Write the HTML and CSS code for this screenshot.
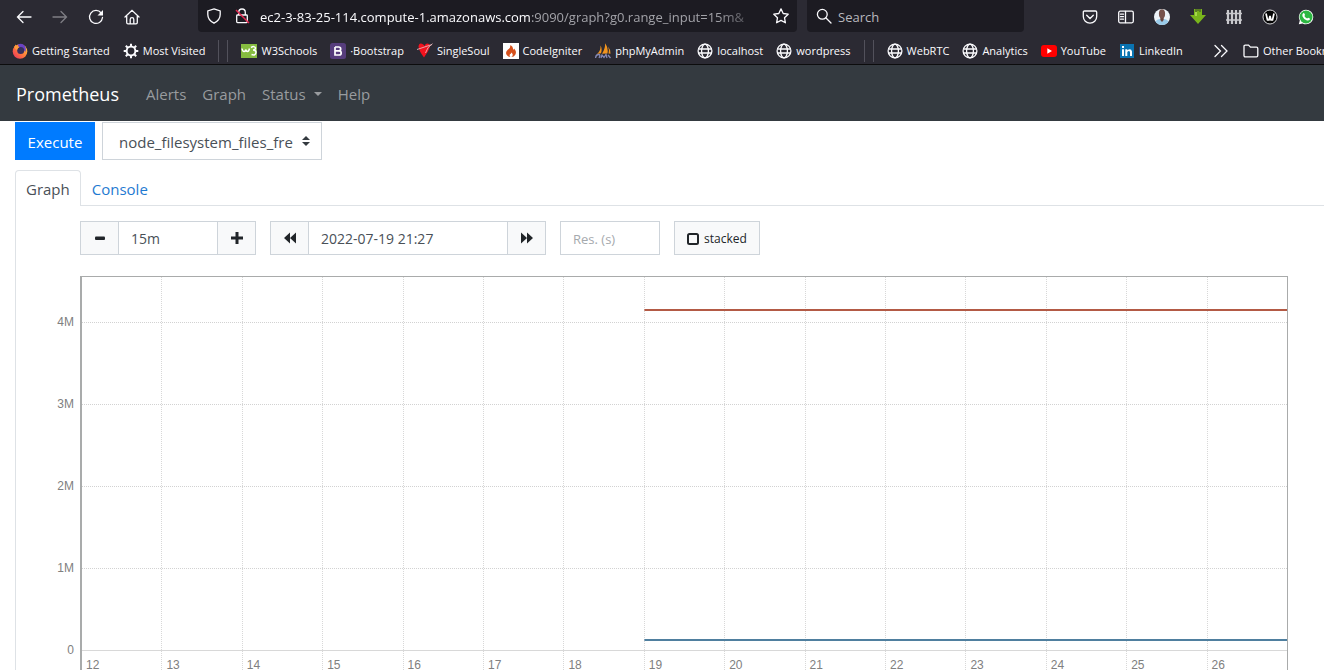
FILE: index.html
```html
<!DOCTYPE html>
<html lang="en">
<head>
<meta charset="utf-8">
<title>Prometheus</title>
<link rel="stylesheet" href="styles.css">
</head>
<body>
<svg class="defs" aria-hidden="true">
  <symbol id="globe" viewBox="0 0 16 16"><g fill="none" stroke="#fbfbfe" stroke-width="1.3"><circle cx="8" cy="8" r="6.9"/><ellipse cx="8" cy="8" rx="3.4" ry="6.9"/><path d="M1.4 6h13.2M1.4 10h13.2"/></g></symbol>
</svg>
<header class="browser">
  <div class="toolbar">
    <div class="tool-group">
      <button class="tool" aria-label="Back"><svg viewBox="0 0 16 16"><path class="line" d="M15 8H1.5M7 2.5 1.5 8 7 13.5"/></svg></button>
      <button class="tool tool-off" aria-label="Forward" disabled><svg viewBox="0 0 16 16"><path class="line" d="M1 8h13.5M9 2.5 14.500 8 9 13.5"/></svg></button>
      <button class="tool" aria-label="Reload"><svg viewBox="0 0 16 16"><path class="line" d="M13.200 4A6.500 6.500 0 1 0 14.500 8.500"/><path fill="#fbfbfe" d="M15 1v5.500H9.500z"/></svg></button>
      <button class="tool" aria-label="Home"><svg viewBox="0 0 16 16"><path class="line" d="M1 8 8 1.300 15 8M2.700 7v6.500q0 1.300 1.300 1.300h8q1.300 0 1.300-1.300V7M6.200 14.500V10.500q0-1.800 1.800-1.800t1.800 1.800v4"/></svg></button>
    </div>
    <div class="urlbar">
      <svg class="icon" viewBox="0 0 16 16"><path class="line" d="M8 .9 14.200 3v3.500c0 3.800-2.500 6.800-6.200 8.700-3.700-1.900-6.200-4.900-6.200-8.700V3z"/></svg>
      <svg class="icon lock" viewBox="0 0 16 16"><path class="line" d="M4.700 7V4.300a3.300 3.300 0 0 1 6.600 0V7M3.500 7h9q.8 0 .8.800v6q0 .8-.8.800h-9q-.8 0-.8-.8v-6q0-.8.8-.8z"/><path stroke="#e22850" stroke-width="1.500" d="M2 2l13 13"/></svg>
      <div class="url"><span class="host">ec2-3-83-25-114.compute-1.amazonaws.com</span>:9090/graph?g0.range_input=15m&amp;</div>
      <svg class="icon" viewBox="0 0 16 16"><path class="line" stroke-linejoin="round" d="M8 .9 10.200 5.500l5 .7-3.700 3.500.9 5.100L8 12.400l-4.400 2.400.9-5.100L.8 6.200l5-.7z"/></svg>
    </div>
    <label class="search">
      <svg class="icon" viewBox="0 0 16 16"><circle class="line" cx="6.300" cy="6.300" r="4.900"/><path class="line" d="m10 10 5 5"/></svg>
      <input class="search-input" type="text" placeholder="Search" aria-label="Search">
    </label>
    <div class="tool-group">
      <button class="tool" aria-label="Pocket"><svg viewBox="0 0 16 16"><path class="line" d="M2.500 2h11q1.200 0 1.200 1.200V7.500a6.700 6.700 0 0 1-13.400 0V3.200Q1.300 2 2.500 2zM4.700 6.300 8 9.500l3.300-3.200"/></svg></button>
      <button class="tool" aria-label="Sidebar"><svg viewBox="0 0 16 16"><rect class="line" x=".7" y="2.200" width="14.600" height="11.600" rx="1.500"/><path class="line" d="M7.500 2.500v11M2.500 5.200H5.500M2.500 7.700H5.500M2.500 10.200H5.500"/></svg></button>
      <button class="tool" aria-label="Profile"><svg viewBox="0 0 16 16"><clipPath id="face"><circle cx="8" cy="8" r="8"/></clipPath><g clip-path="url(#face)"><path fill="#edf3f8" d="M0 0h16v16H0z"/><path fill="#9acbe9" d="M0 16Q1 10.500 6 10l2 2 2-2q5 .5 6 6z"/><path fill="#66453f" d="M6.300 8h3.400v3L8 13l-1.700-2z"/><ellipse cx="8" cy="4.800" rx="3.100" ry="4.600" fill="#76524c"/></g></svg></button>
      <button class="tool" aria-label="Downloader"><svg viewBox="0 0 16 16"><path fill="#79b51c" d="M4 0h8v6h4l-8 9-8-9h4z"/><path stroke="#2b2a33" stroke-width=".8" d="M6 0v3M8 0v2M10 0v3"/><path fill="#a6d84a" d="M5 3h2v4H5z"/></svg></button>
      <button class="tool" aria-label="Fence"><svg viewBox="0 0 16 16"><path stroke="#c9c9cd" stroke-width="2.200" d="M2 1v14M6 1v14M10 1v14M14 1v14"/><path stroke="#c9c9cd" stroke-width="1.300" d="M0 4.500h16M0 11h16"/></svg></button>
      <button class="tool" aria-label="W extension"><svg viewBox="0 0 16 16"><circle cx="8" cy="8" r="7" fill="#050505" stroke="#d8d8da" stroke-width="1"/><path fill="none" stroke="#fff" stroke-width="1.700" d="M4 4.500 5.500 11H7L8 7l1 4h1.500L12 4.500"/></svg></button>
      <button class="tool" aria-label="WhatsApp"><svg viewBox="0 0 16 16"><path fill="#fff" d="M8 .7a7.300 7.300 0 0 1 0 14.600q-1.800 0-3.400-.9L.8 15.300l1-3.700A7.300 7.300 0 0 1 8 .7z"/><circle cx="8" cy="8" r="6.500" fill="#2cb742"/><path fill="#fff" d="M5.200 4.300q.7-.6 1 0l.8 1.500q.1.400-.6 1.100.9 1.900 2.700 2.700.8-1 1.200-.9l1.500.8q.5.300-.1 1.200-1.200 1.300-3.200.5-3-1.200-4.100-4-.4-2 .8-2.900z"/></svg></button>
    </div>
  </div>
  <nav class="bookmarks">
    <a class="mark" href="#"><svg class="icon" viewBox="0 0 16 16"><defs><linearGradient id="fox" x1="1" y1="0" x2="0" y2="1"><stop offset="0" stop-color="#ffd83c"/><stop offset=".5" stop-color="#ff7b3b"/><stop offset="1" stop-color="#e92a63"/></linearGradient></defs><circle cx="8" cy="8.500" r="7.300" fill="url(#fox)"/><path fill="#6a42c4" d="M6 1.500Q10-.5 13 3q1.500 3 .3 6-1-3-4-3.500Q6 5 6 1.500z"/><circle cx="8.700" cy="7.400" r="3.500" fill="#37305c"/><path fill="#ff9a3a" d="M2 4q1-1 1.500-2.500Q5 3.500 7.500 4q-2 .8-2.500 3-1.500 0-3-3z"/></svg>Getting Started</a>
    <a class="mark" href="#"><svg class="icon" viewBox="0 0 16 16"><circle cx="8" cy="8" r="4.400" fill="none" stroke="#fbfbfe" stroke-width="2"/><path stroke="#fbfbfe" stroke-width="2" d="M8 .7V4M8 12v3.300M.7 8H4M12 8h3.300M2.800 2.800 5 5M11 11l2.200 2.200M13.200 2.800 11 5M5 11l-2.200 2.200"/></svg>Most Visited</a>
    <span class="rules"></span>
    <a class="mark" href="#"><svg class="icon" viewBox="0 0 16 16"><path fill="#86bc40" d="M0 1h16v14H0z"/><path fill="none" stroke="#fff" stroke-width="1.500" d="M1 5.500q.5 3 2 3t1.700-2q.5 2 1.800 2T8.500 5.500M10 4.500q3.500-2 4.500.5 0 2-2.500 2 3 0 3 2.500-.5 3.500-4.500 2"/></svg>W3Schools</a>
    <a class="mark" href="#"><svg class="icon" viewBox="0 0 16 16"><rect width="16" height="16" rx="2.500" fill="#563d7c"/><path fill="none" stroke="#fff" stroke-width="1.700" d="M5 4h3.700q2 0 2 1.900T8.700 7.800H5M5 7.800h4q2.200 0 2.200 2.100T9 12H5zV4"/></svg>·Bootstrap</a>
    <a class="mark" href="#"><svg class="icon" viewBox="0 0 16 16"><path fill="#f3121e" d="M7 14.500Q2 8 1.500 3.500 2-.5 5 .7 7 1.500 7.500 3 9-.5 12 1q1.500 1 .5 4-1.500 4-5.500 9.500z"/><path fill="none" stroke="#e3b5b8" stroke-width=".9" d="M15.500.7Q10 4 8.500 10M15 1.500 0 6.500"/></svg>SingleSoul</a>
    <a class="mark" href="#"><svg class="icon" viewBox="0 0 16 16"><path fill="#fff" d="M0 0h16v16H0z"/><path fill="#d6501c" d="M7.500 2q3 2 2.500 4.500 1 .3 1.200-1Q14 9 12.300 11.700 11 14 8.300 14q2-1 1.200-3-.3-1-1.200-1.600Q8 11 7 11.200 6 12.800 7.500 14q-4-.5-4.500-4Q3 8 5 6.500 7.500 5 7.500 2z"/></svg>CodeIgniter</a>
    <a class="mark" href="#"><svg class="icon" viewBox="0 0 16 16"><path fill="#f2941e" d="M5.500 2.500Q6 8 2 11l4-.7Q7.500 6 5.500 2.500zM10 .3q.5 5-3 10.500l5.500-.3Q13.500 5 10 .3zM13 3.500q1.500 3 .5 7l2 .2Q16 7 13 3.500z"/><path fill="none" stroke="#8589b5" stroke-width="1.300" d="M.5 15q.5-3.500 3-3.500T4 15M6 15l1-3 2 2.500 2-3 1 3.500M13 12l2.500 3"/></svg>phpMyAdmin</a>
    <a class="mark" href="#"><svg class="icon"><use href="#globe"/></svg>localhost</a>
    <a class="mark" href="#"><svg class="icon"><use href="#globe"/></svg>wordpress</a>
    <span class="rules"></span>
    <a class="mark" href="#"><svg class="icon"><use href="#globe"/></svg>WebRTC</a>
    <a class="mark" href="#"><svg class="icon"><use href="#globe"/></svg>Analytics</a>
    <a class="mark" href="#"><svg class="icon" viewBox="0 0 16 16"><rect y="2" width="16" height="12" rx="3" fill="#f00"/><path fill="#fff" d="m6.300 5.300 4.700 2.700-4.700 2.700z"/></svg>YouTube</a>
    <a class="mark" href="#"><svg class="icon" viewBox="0 0 16 16"><rect x="1" y="1" width="14" height="14" fill="#0a73b1"/><path fill="#fff" d="M3 6.300h2V13H3zM3 3h2v2H3zM6.300 6.300h2v1q3.700-2.700 4.700 1.200V13h-2V9.300q-.7-2.200-2.700-.3v4h-2z"/></svg>LinkedIn</a>
    <div class="marks-end">
      <button class="more" aria-label="More bookmarks"><svg class="icon" viewBox="0 0 16 16"><path class="line" d="m2 2.500 5.500 5.500L2 13.500M8.500 2.500 14 8l-5.500 5.500"/></svg></button>
      <a class="mark" href="#"><svg class="icon" viewBox="0 0 16 16"><path class="line" d="M1 12.500V3.300q0-1.200 1.200-1.200H5.500L7.500 4.200h6q1.300 0 1.300 1.300v7q0 1.300-1.300 1.300h-11.200Q1 13.800 1 12.500z"/></svg>Other Bookmarks</a>
    </div>
  </nav>
</header>
<nav class="navbar">
  <a class="brand" href="#">Prometheus</a>
  <a class="nav-link" href="#">Alerts</a>
  <a class="nav-link" href="#">Graph</a>
  <a class="nav-link caret" href="#">Status</a>
  <a class="nav-link" href="#">Help</a>
</nav>
<main class="page">
  <div class="query">
    <button class="execute">Execute</button>
    <div class="metric">
      <select class="metric-select" aria-label="Metric"><option>node_filesystem_files_fre</option></select>
      <svg class="metric-arrows" viewBox="0 0 8 10"><path fill="#343a40" d="M4 0 8 4H0zM0 6h8l-4 4z"/></svg>
    </div>
  </div>
  <div class="tabs">
    <a class="tab tab-active" href="#">Graph</a>
    <a class="tab" href="#">Console</a>
  </div>
  <section class="panel">
    <div class="controls">
      <div class="group">
        <button class="step" aria-label="Shrink range"><svg viewBox="0 0 12 12"><rect x="1" y="4.500" width="10" height="3.500" rx="1"/></svg></button>
        <input class="field range" type="text" value="15m" aria-label="Range">
        <button class="step" aria-label="Grow range"><svg viewBox="0 0 12 12"><path d="M4.500 0h3v4.500H12v3H7.500V12h-3V7.500H0v-3h4.500z"/></svg></button>
      </div>
      <div class="group">
        <button class="step" aria-label="Earlier"><svg viewBox="0 0 12 12"><path d="M6 .5v11L0 6zM12 .5v11L6 6z"/></svg></button>
        <input class="field time" type="text" value="2022-07-19 21:27" aria-label="End time">
        <button class="step" aria-label="Later"><svg viewBox="0 0 12 12"><path d="M0 .5v11L6 6zM6 .5v11L12 6z"/></svg></button>
      </div>
      <input class="field res" type="text" placeholder="Res. (s)" aria-label="Resolution">
      <button class="stacked"><svg viewBox="0 0 12 12"><rect x="1" y="1" width="10" height="10" rx="1.500" fill="none" stroke="#212529" stroke-width="2"/></svg>stacked</button>
    </div>
    <div class="graph">
      <div class="y-axis"><span>4M</span><span>3M</span><span>2M</span><span>1M</span><span>0</span></div>
      <div class="plot">
        <div class="columns">
          <span>12</span><span>13</span><span>14</span><span>15</span><span>16</span><span>17</span><span>18</span><span>19</span><span>20</span><span>21</span><span>22</span><span>23</span><span>24</span><span>25</span><span>26</span>
        </div>
        <svg class="series" aria-hidden="true">
          <g class="grid"><path d="M0 45.500H3000M0 127.500H3000M0 209.500H3000M0 291.500H3000"/></g>
          <path class="zero" d="M0 373.500H3000"/>
          <line class="red" x1="46.67%" x2="100%" y1="33" y2="33"/>
          <line class="blue" x1="46.67%" x2="100%" y1="363" y2="363"/>
        </svg>
      </div>
    </div>
  </section>
</main>
</body>
</html>
```
FILE: styles.css
```css
* { box-sizing: border-box; }
body {
  margin: 0;
  height: 100vh;
  overflow: hidden;
  display: flex;
  flex-direction: column;
  background: #fff;
  color: #495057;
  font: 15px/24px "Open Sans", "Noto Sans", sans-serif;
}
a { color: inherit; text-decoration: none; }
button, input, select { font: inherit; color: inherit; margin: 0; border-radius: 0; }
svg { display: block; }
.defs { display: none; }
.icon { width: 16px; height: 16px; flex: none; }
.line { fill: none; stroke: #fbfbfe; stroke-width: 1.3; stroke-linecap: round; }

/* Browser window */
.browser { flex: none; background: #2b2a33; color: #fbfbfe; border-bottom: 1px solid #0c0c0d; }
.toolbar { display: flex; align-items: center; height: 34px; padding-left: 6px; }
.tool-group { display: flex; flex: none; }
.tool { width: 36px; height: 32px; padding: 0 10px; border: 0; background: none; }
.tool svg { width: 16px; height: 16px; }
.tool-off { opacity: 0.4; }
.urlbar, .search {
  display: flex;
  align-items: center;
  height: 32px;
  margin-bottom: 2px;
  background: #1c1b22;
  border-radius: 0 0 4px 4px;
  font-size: 13px;
}
.urlbar { flex: 583 1 0; min-width: 0; margin-left: 48px; padding: 0 8px; }
.lock { margin: 0 10px 0 12px; }
.url {
  flex: 1;
  min-width: 0;
  margin-right: 8px;
  padding-top: 2px;
  overflow: hidden;
  white-space: nowrap;
  color: #a2a2a8;
  -webkit-mask-image: linear-gradient(to left, transparent, #000 48px);
  mask-image: linear-gradient(to left, transparent, #000 48px);
}
.host { color: #fbfbfe; }
.search { flex: 199 1 0; min-width: 0; gap: 6px; margin-left: 10px; margin-right: 48px; padding: 0 9px; }
.search-input { flex: 1; min-width: 0; padding: 2px 0 0; border: 0; background: none; }
.search-input::placeholder { color: #b8b8be; opacity: 1; }
.bookmarks {
  display: flex;
  align-items: center;
  gap: 13px;
  height: 30px;
  padding: 3px 0 0 12px;
  overflow: hidden;
  white-space: nowrap;
  font-size: 11px;
}
.mark { display: flex; align-items: center; gap: 4px; flex: none; }
.rules { flex: none; width: 10px; height: 22px; border: solid #52515b; border-width: 0 1px; }
.marks-end { display: flex; align-items: center; gap: 14px; flex: none; width: 111px; margin-left: auto; }
.more { padding: 0; border: 0; background: none; }

/* Application bar */
.navbar { display: flex; align-items: center; gap: 16px; flex: none; height: 56px; padding: 2px 16px 0; background: #343a40; color: #999c9f; }
.brand { margin-right: 11px; font-size: 18px; color: #fff; }
.caret { display: flex; align-items: center; gap: 8px; }
.caret::after { content: ""; border: solid transparent; border-width: 4px 4px 0; border-top-color: currentColor; }

.page { padding: 1px 0 0 15px; }
.query { display: flex; gap: 7px; }
.execute { width: 80px; height: 38px; padding: 2px 0 0; border: 0; background: #007bff; color: #fff; }
.metric { position: relative; width: 220px; }
.metric-select { width: 100%; height: 38px; padding: 2px 16px 0; border: 1px solid #ced4da; background: #fff; appearance: none; }
.metric-arrows { position: absolute; top: 14px; right: 12px; width: 8px; height: 10px; pointer-events: none; }
.tabs { display: flex; margin-top: 10px; border-bottom: 1px solid #dee2e6; }
.tab { height: 35px; padding: 7px 11px 0; color: #1f7ad1; }
.tab-active { height: 36px; margin-bottom: -1px; padding: 6px 10px 0; border: 1px solid #dee2e6; border-bottom: 0; border-radius: 4px 4px 0 0; background: #fff; color: #495057; }
.panel { border-left: 1px solid #dee2e6; }

.controls { display: flex; gap: 14px; padding: 15px 0 0 64px; }
.group { display: flex; }
.step, .stacked { height: 34px; border: 1px solid #ced4da; background: #f8f9fa; color: #212529; }
.step { width: 39px; padding: 0 13px; }
.step svg, .stacked svg { width: 12px; height: 12px; fill: #212529; }
.field { height: 34px; padding: 0 12px; border: 1px solid #ced4da; background: #fff; font-size: 14px; }
.field::placeholder { color: #a5a9ad; opacity: 1; font-size: 13px; }
.range { width: 100px; margin: 0 -1px; }
.time { width: 200px; margin: 0 -1px; }
.res { width: 100px; }
.stacked { display: flex; align-items: center; gap: 5px; padding: 2px 12px 0; font-size: 12px; }

/* Chart */
.graph { display: flex; margin-top: 21px; padding-right: 36px; font: 12px/16px "Liberation Sans", Arial, sans-serif; color: #808080; }
.y-axis { display: flex; flex-direction: column; gap: 66px; width: 64px; padding: 38px 6px 0 0; text-align: right; }
.plot { position: relative; flex: 1; height: 400px; border: solid #a9abab; border-width: 1px 1px 0 2px; }
.columns { display: grid; grid-template-columns: repeat(15, 1fr); height: 100%; margin-left: -1px; line-height: 10px; }
.columns span { padding: 383px 0 0 4px; border-left: 1px dotted #d8d8d8; }
.columns span:first-child { border-left-color: transparent; }
.series { position: absolute; inset: 0; width: 100%; height: 100%; }
.grid { stroke: #d2d2d2; stroke-dasharray: 1 1; }
.zero { stroke: #d8d8d8; }
.red { stroke: #b35a45; stroke-width: 2; }
.blue { stroke: #4f7f9f; stroke-width: 2; }
```
